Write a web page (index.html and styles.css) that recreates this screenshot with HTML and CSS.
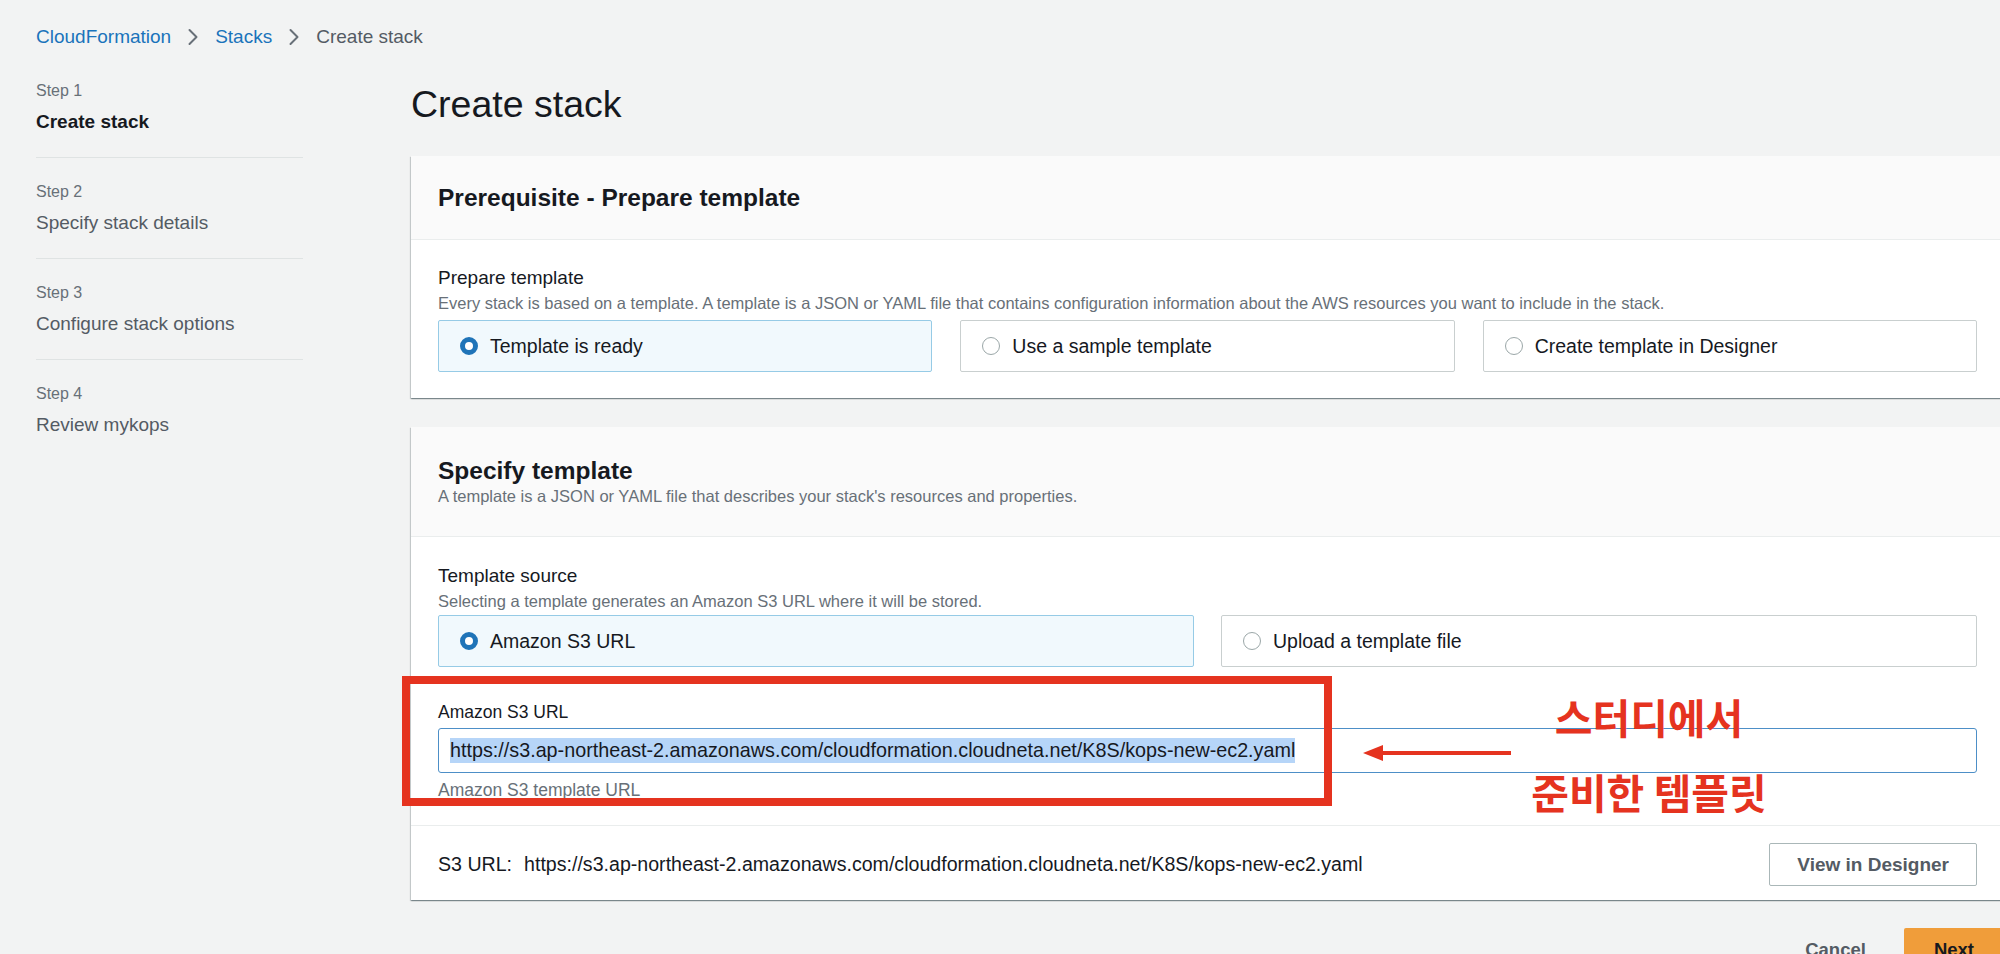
FILE: index.html
```html
<!DOCTYPE html>
<html lang="en">
<head>
<meta charset="utf-8">
<title>Create stack</title>
<link rel="stylesheet" href="styles.css">
</head>
<body>
<div class="app">
  <nav class="breadcrumb">
    <a class="crumb-link">CloudFormation</a>
    <svg class="chev" viewBox="0 0 12 18" width="12" height="18"><path d="M2.5 2 L9.5 9 L2.5 16" /></svg>
    <a class="crumb-link">Stacks</a>
    <svg class="chev" viewBox="0 0 12 18" width="12" height="18"><path d="M2.5 2 L9.5 9 L2.5 16" /></svg>
    <span class="crumb-current">Create stack</span>
  </nav>

  <div class="layout">
    <aside class="steps">
      <div class="step">
        <div class="step-label">Step 1</div>
        <div class="step-title active">Create stack</div>
      </div>
      <div class="step">
        <div class="step-label">Step 2</div>
        <div class="step-title">Specify stack details</div>
      </div>
      <div class="step">
        <div class="step-label">Step 3</div>
        <div class="step-title">Configure stack options</div>
      </div>
      <div class="step last">
        <div class="step-label">Step 4</div>
        <div class="step-title">Review mykops</div>
      </div>
    </aside>

    <main class="main">
      <h1 class="page-title">Create stack</h1>

      <section class="panel">
        <header class="panel-header first">
          <h2 class="panel-title">Prerequisite - Prepare template</h2>
        </header>
        <div class="panel-body first">
          <div class="field-label">Prepare template</div>
          <div class="field-desc">Every stack is based on a template. A template is a JSON or YAML file that contains configuration information about the AWS resources you want to include in the stack.</div>
          <div class="tiles three">
            <div class="tile selected"><span class="radio on"></span><span>Template is ready</span></div>
            <div class="tile"><span class="radio"></span><span>Use a sample template</span></div>
            <div class="tile"><span class="radio"></span><span>Create template in Designer</span></div>
          </div>
        </div>
      </section>

      <section class="panel second">
        <header class="panel-header">
          <h2 class="panel-title">Specify template</h2>
          <div class="header-desc">A template is a JSON or YAML file that describes your stack's resources and properties.</div>
        </header>
        <div class="panel-body second">
          <div class="field-label">Template source</div>
          <div class="field-desc tight">Selecting a template generates an Amazon S3 URL where it will be stored.</div>
          <div class="tiles two">
            <div class="tile selected"><span class="radio on"></span><span>Amazon S3 URL</span></div>
            <div class="tile"><span class="radio"></span><span>Upload a template file</span></div>
          </div>
          <div class="url-field">
            <div class="field-label small">Amazon S3 URL</div>
            <div class="text-input"><span class="selected-text">https://s3.ap-northeast-2.amazonaws.com/cloudformation.cloudneta.net/K8S/kops-new-ec2.yaml</span></div>
            <div class="field-hint">Amazon S3 template URL</div>
          </div>
        </div>
        <div class="panel-footer">
          <div class="s3-url"><span>S3 URL:</span><span>https://s3.ap-northeast-2.amazonaws.com/cloudformation.cloudneta.net/K8S/kops-new-ec2.yaml</span></div>
          <button class="btn-normal">View in Designer</button>
        </div>
      </section>

      <div class="actions">
        <button class="btn-link">Cancel</button>
        <button class="btn-primary">Next</button>
      </div>
    </main>
  </div>

  <div class="annot-box"></div>
  <svg class="annot-arrow" viewBox="0 0 160 24" width="160" height="24">
    <path d="M20 10 L150 10 L150 14 L20 14 Z" />
    <path d="M2 12 L22 4 L22 20 Z" />
  </svg>
  <div class="annot-text">스터디에서<br>준비한 템플릿</div>
</div>
</body>
</html>
```

FILE: styles.css
```css
html, body {
  margin: 0;
  padding: 0;
}

body {
  background: #f2f3f3;
  font-family: "Liberation Sans", Arial, sans-serif;
  color: #16191f;
  width: 2000px;
  height: 954px;
  overflow: hidden;
}

.app {
  position: relative;
  width: 2000px;
  height: 954px;
}

/* Breadcrumb */
.breadcrumb {
  display: flex;
  align-items: center;
  padding: 25px 0 0 36px;
  height: 24px;
  font-size: 19px;
  line-height: 24px;
}

.crumb-link {
  color: #1a73bb;
}

.crumb-current {
  color: #545b64;
}

.chev {
  margin: 0 16px;
}

.chev path {
  fill: none;
  stroke: #687078;
  stroke-width: 2;
  stroke-linecap: round;
  stroke-linejoin: round;
}

/* Layout */
.layout {
  display: flex;
  align-items: flex-start;
}

.steps {
  width: 267px;
  margin-left: 36px;
  padding-top: 32px;
  flex-shrink: 0;
}

.step {
  padding-bottom: 23px;
  margin-bottom: 24px;
  border-bottom: 1px solid #dfe3e3;
}

.step.last {
  border-bottom: none;
}

.step-label {
  font-size: 16px;
  line-height: 20px;
  color: #687078;
}

.step-title {
  margin-top: 9px;
  font-size: 19px;
  line-height: 24px;
  color: #545b64;
}

.step-title.active {
  color: #16191f;
  font-weight: bold;
}

.main {
  width: 1593px;
  margin-left: 108px;
  padding-top: 33px;
  flex-shrink: 0;
}

.page-title {
  margin: 0 0 30px;
  font-size: 37.5px;
  line-height: 44px;
  font-weight: normal;
  color: #16191f;
}

/* Panels */
.panel {
  background: #ffffff;
  box-shadow: 0 1px 1px 0 rgba(0, 28, 36, 0.3), 1px 1px 1px 0 rgba(0, 28, 36, 0.15), -1px 1px 1px 0 rgba(0, 28, 36, 0.15);
}

.panel.second {
  margin-top: 29px;
}

.panel-header {
  background: #fafafa;
  border-bottom: 1px solid #eaeded;
  padding: 29px 27px 30px;
}

.panel-header.first {
  padding: 27px 27px 26px;
}

.panel-title {
  margin: 0;
  font-size: 24.5px;
  line-height: 30px;
  font-weight: bold;
  color: #16191f;
}

.header-desc {
  font-size: 16.5px;
  line-height: 20px;
  color: #687078;
}

.panel-body {
  padding: 26px 27px 26px;
}

.panel-body.second {
  padding: 27px 27px 26px;
}

.field-label {
  font-size: 19px;
  line-height: 24px;
  color: #16191f;
}

.field-label.small {
  font-size: 17.5px;
}

.field-desc {
  margin-top: 3px;
  font-size: 16.5px;
  line-height: 20px;
  color: #687078;
}

.tiles {
  display: grid;
  margin-top: 7px;
}

.field-desc.tight + .tiles {
  margin-top: 4px;
}

.tiles.three {
  grid-template-columns: repeat(3, 1fr);
  column-gap: 28px;
}

.tiles.two {
  grid-template-columns: repeat(2, 1fr);
  column-gap: 27px;
}

.tile {
  display: flex;
  align-items: center;
  gap: 12px;
  height: 52px;
  box-sizing: border-box;
  padding-left: 21px;
  border: 1px solid #c9cfcf;
  border-radius: 2px;
  background: #ffffff;
  font-size: 19.5px;
  color: #16191f;
}

.tile.selected {
  border-color: #96cbe6;
  background: #f1f9fd;
}

.radio {
  width: 18px;
  height: 18px;
  box-sizing: border-box;
  border-radius: 50%;
  border: 1.5px solid #9ba7a8;
  background: #ffffff;
  flex-shrink: 0;
}

.radio.on {
  border: 5.5px solid #1f74b8;
}

/* URL field */
.url-field {
  margin-top: 33px;
}

.text-input {
  margin-top: 4px;
  height: 45px;
  box-sizing: border-box;
  border: 1px solid #4d8fc7;
  border-radius: 3px;
  padding: 0 11px;
  display: flex;
  align-items: center;
  background: #ffffff;
  font-size: 19.75px;
  color: #16191f;
}

.selected-text {
  background: #b6d5f8;
  line-height: 25px;
}

.field-hint {
  margin-top: 8px;
  font-size: 17.5px;
  line-height: 18px;
  color: #687078;
}

.panel-footer {
  display: flex;
  align-items: center;
  justify-content: space-between;
  border-top: 1px solid #eaeded;
  padding: 17px 27px 14px;
}

.s3-url {
  display: flex;
  gap: 12px;
  font-size: 19.6px;
  color: #16191f;
}

.btn-normal {
  height: 43px;
  padding: 0 27px;
  border: 1px solid #aab7b8;
  border-radius: 2px;
  background: #ffffff;
  font-family: inherit;
  font-size: 19px;
  font-weight: bold;
  color: #545b64;
}

.actions {
  display: flex;
  justify-content: flex-end;
  align-items: flex-start;
  margin-top: 28px;
}

.btn-link {
  height: 44px;
  padding: 0 20px;
  margin-right: 18px;
  border: none;
  background: transparent;
  font-family: inherit;
  font-size: 18.5px;
  font-weight: bold;
  color: #545b64;
}

.btn-primary {
  height: 44px;
  padding: 0 30px;
  border: none;
  border-radius: 2px;
  background: #f09d3a;
  font-family: inherit;
  font-size: 18.5px;
  font-weight: bold;
  color: #16191f;
}

/* Annotation overlay */
.annot-box {
  position: absolute;
  left: 402px;
  top: 676px;
  width: 930px;
  height: 130px;
  box-sizing: border-box;
  border: 8px solid #e5331f;
}

.annot-arrow {
  position: absolute;
  left: 1361px;
  top: 741px;
}

.annot-arrow path {
  fill: #e5331f;
}

.annot-text {
  position: absolute;
  left: 1494px;
  top: 679px;
  width: 310px;
  text-align: center;
  font-family: "Noto Sans CJK KR", "Noto Sans", sans-serif;
  font-size: 41px;
  line-height: 75px;
  font-weight: bold;
  color: #e5331f;
  letter-spacing: 0;
  word-spacing: 0;
}
```
